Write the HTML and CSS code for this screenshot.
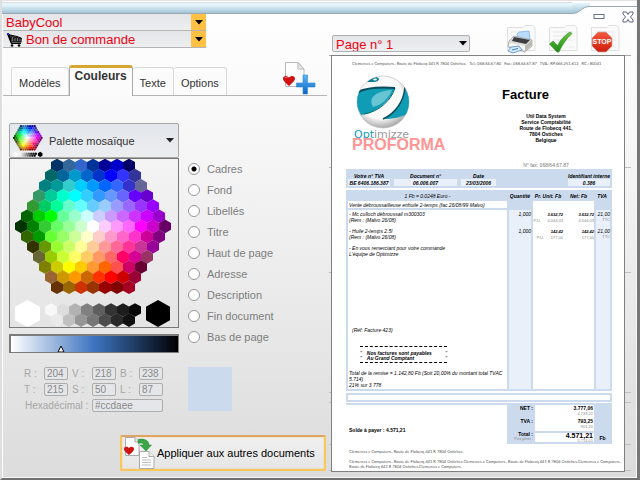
FILE: index.html
```
<!DOCTYPE html>
<html lang="fr">
<head>
<meta charset="utf-8">
<title>BabyCool</title>
<link rel="stylesheet" href="styles.css">
</head>
<body>
<div class="window">
  <header class="titlebar">
    <div class="bar"></div>
    <svg class="curve" width="18" height="14" viewBox="0 0 18 14">
      <defs><linearGradient id="tb" x1="0" y1="0" x2="0" y2="1"><stop offset="0" stop-color="#e6f5fc"/><stop offset="1" stop-color="#a3c4d6"/></linearGradient></defs>
      <path d="M0 3H18V6.500C9 6.500 9 13.500 0 13.500Z" fill="url(#tb)"/>
      <path d="M0 13.500C9 13.500 9 6.500 18 6.500" fill="none" stroke="#9aa9b2"/>
    </svg>
    <div class="controls">
      <button type="button" aria-label="Réduire"><svg width="12" height="12" viewBox="0 0 12 12"><rect x="1" y="3.500" width="10" height="4" fill="#fff" stroke="#6a6f8a"/></svg></button>
      <button type="button" aria-label="Fermer"><svg width="12" height="12" viewBox="0 0 12 12"><path d="M1 1H4.500L6 3.500L7.500 1H11V3L8.500 6L11 9V11H7.500L6 8.500L4.500 11H1V9L3.500 6L1 3Z" fill="#fff" stroke="#5d627e"/></svg></button>
    </div>
  </header>

  <main class="columns">
    <section class="left">
      <div class="pickers">
        <div class="field">
          <select aria-label="Société"><option>BabyCool</option></select>
          <span class="arrow"><svg width="8" height="5" viewBox="0 0 8 5"><path d="M0 0H8L4 4.500Z"/></svg></span>
        </div>
        <div class="field with-icon">
          <select aria-label="Document"><option>Bon de commande</option></select>
          <svg class="cart" width="16" height="14" viewBox="0 0 16 14"><path d="M0 1H3L5 9.500H14V11H4.500L3.500 10Z"/><path d="M3 2.500L15 5L14.500 9.500L5 9Z" fill="#222"/><path d="M5.500 4V8M8 5V8M10.500 5V8M13 6V8" stroke="#999" stroke-width=".7"/><path d="M3 2L10 3.500L14 5" stroke="#000"/><path d="M0 1H2" stroke="#22f" stroke-width="2"/><circle cx="5" cy="12.500" r="1.300"/><circle cx="12" cy="12.500" r="1.300"/></svg>
          <span class="arrow"><svg width="8" height="5" viewBox="0 0 8 5"><path d="M0 0H8L4 4.500Z"/></svg></span>
        </div>
      </div>

      <div class="tabrow">
        <nav class="tabs">
          <button type="button">Modèles</button>
          <button type="button" class="active">Couleurs</button>
          <button type="button">Texte</button>
          <button type="button">Options</button>
        </nav>
        <button type="button" class="plain" aria-label="Ajouter aux favoris">
          <svg width="34" height="34" viewBox="0 0 34 34">
            <defs><linearGradient id="blue" x1="0" y1="0" x2="0" y2="1"><stop offset="0" stop-color="#5bb9f7"/><stop offset="1" stop-color="#0a62c4"/></linearGradient></defs>
            <path d="M3.500 1.500H16L22 8V25.500H3.500Z" fill="#fdfdfd" stroke="#b8b8b8"/><path d="M16 1.500V8H22Z" fill="#e9e9e9" stroke="#b8b8b8"/>
            <path d="M7 25C4 22 1 20 1 17.500C1 14.500 5 14 7 16.500C9 14 13 14.500 13 17.500C13 20 10 22 7 25Z" fill="#cf1313"/><path d="M3 17C3.500 16 5 16 5.500 17" stroke="#f88" fill="none"/>
            <path d="M21 14H25.500V22H33V26H25.500V33H21V26H14.500V22H21Z" fill="url(#blue)" stroke="#2f86d8" stroke-width=".6"/>
          </svg>
        </button>
      </div>

      <div class="editor">
        <div class="palette">
          <button type="button" class="palette-button">
            <svg width="32" height="32" viewBox="0 0 168 168"><use href="#mosaic"/></svg>
            <span>Palette mosaïque</span>
            <svg width="8" height="5" viewBox="0 0 8 5"><path d="M0 0H8L4 4.500Z" fill="#222"/></svg>
          </button>
          <svg class="mosaic" viewBox="0 0 168 168" role="img" aria-label="Couleurs"><g id="mosaic"></g></svg>
          <input class="shade" type="range" min="0" max="100" value="29" aria-label="Luminosité">
        </div>
        <div class="targets">
          <label><input type="radio" name="target" checked>Cadres</label>
          <label><input type="radio" name="target">Fond</label>
          <label><input type="radio" name="target">Libellés</label>
          <label><input type="radio" name="target">Titre</label>
          <label><input type="radio" name="target">Haut de page</label>
          <label><input type="radio" name="target">Adresse</label>
          <label><input type="radio" name="target">Description</label>
          <label><input type="radio" name="target">Fin document</label>
          <label><input type="radio" name="target">Bas de page</label>
        </div>
        <div class="values">
          <label for="r">R :</label><input id="r" value="204">
          <label for="v">V :</label><input id="v" value="218">
          <label for="b">B :</label><input id="b" value="238">
          <label for="t">T :</label><input id="t" value="215">
          <label for="s">S :</label><input id="s" value="50">
          <label for="l">L :</label><input id="l" value="87">
          <label for="hex" class="hex-label">Hexadécimal :</label><input id="hex" class="hex" value="#ccdaee">
        </div>
        <div class="swatch"></div>
      </div>

      <button type="button" class="apply">
        <svg width="32" height="32" viewBox="0 0 32 32">
          <path d="M2.500 .5H12L16 5V18.500H2.500Z" fill="#fff" stroke="#aaa"/><path d="M12 .5V5H16" fill="#eee" stroke="#aaa"/>
          <path d="M16.500 14.500H26L31 19.500V31.500H16.500Z" fill="#fff" stroke="#aaa"/><path d="M26 14.500V19.500H31" fill="#eee" stroke="#aaa"/>
          <path d="M19 20.500H24M19 23H28M19 25.500H28M19 28H28" stroke="#bbb"/>
          <path d="M15 2.500C22 1 26 4 26 8H28.500L23 14L17 8H20.500C20.500 6 18 5.500 15 6.500Z" fill="#3aa648" stroke="#2b8b3a" stroke-width=".5"/>
          <path d="M6 18C3 15.500 1 14 1 12C1 9.500 4.500 9 6 11C7.500 9 11 9.500 11 12C11 14 9 15.500 6 18Z" fill="#cf1313"/>
        </svg>
        <span>Appliquer aux autres documents</span>
      </button>
    </section>

    <section class="right">
      <div class="toolbar">
        <div class="field page-field">
          <select aria-label="Page"><option>Page n° 1</option></select>
          <span class="arrow"><svg width="8" height="5" viewBox="0 0 8 5"><path d="M0 0H8L4 4.500Z"/></svg></span>
        </div>
        <div class="tools">
          <button type="button" class="plain" aria-label="Imprimer">
            <svg width="30" height="30" viewBox="0 0 30 30">
              <g id="folder"><path d="M1.500 3.500H17L19 1.500H27L29 4V26.500H1.500Z" fill="#fafafa" stroke="#e0e0e0"/><path d="M5 8H25M5 12H25M5 16H25M21 23H26" stroke="#e8e8e8"/></g>
              <path d="M11 10L13 8L23 7L24 15L13 17Z" fill="#b9dcfa" stroke="#6da5d8" stroke-width=".6"/>
              <path d="M3 17L8 12L26 16V22L19 28L2 23Z" fill="#dcdcd8" stroke="#999" stroke-width=".7"/>
              <path d="M8 13L24 16L20 20L6 17Z" fill="#3c3e42"/><path d="M4 19L19 22V26L3 22Z" fill="#f7f7f5"/><path d="M19 22L26 16V21L19 27Z" fill="#b9b9b5"/>
              <path d="M5 23L13 22L16 26L7 29L2 27Z" fill="#d3e9ff" stroke="#3d7cc4" stroke-width=".7"/><path d="M6 26L12 24.500" stroke="#3d7cc4"/>
            </svg>
          </button>
          <button type="button" class="plain" aria-label="Valider">
            <svg width="30" height="30" viewBox="0 0 30 30"><defs><linearGradient id="green" x1="0" y1="0" x2="0" y2="1"><stop offset="0" stop-color="#6cc43d"/><stop offset="1" stop-color="#1f8a1c"/></linearGradient></defs><use href="#folder"/><path d="M1.500 20L5 17L9.500 21.500C13 15 17 11 22 8L24 9.500C18 15 14 21 11 28H9Z" fill="url(#green)" stroke="#2f8e24" stroke-width=".6"/></svg>
          </button>
          <button type="button" class="plain" aria-label="Stop">
            <svg width="30" height="30" viewBox="0 0 30 30"><defs><linearGradient id="red" x1="0" y1="0" x2="0" y2="1"><stop offset="0" stop-color="#f4593f"/><stop offset="1" stop-color="#cf1d0c"/></linearGradient></defs><use href="#folder"/><path d="M8 8H16L22 14V22L16 28H8L2 22V14Z" fill="url(#red)" stroke="#c9a9a3" stroke-width=".7"/><text class="stop-text" x="12" y="20" text-anchor="middle">STOP</text></svg>
          </button>
        </div>
      </div>

      <div class="preview">
        <article class="sheet">
          <p class="fine">Clemerces e Computers., Route de Flobecq 441 R 7804 Ostiches. &nbsp; Tel.: 068.64.67.80 &nbsp; Fax.: 068.64.67.87 &nbsp; TVA.: RP.666.251.612 &nbsp; RC.: 80041</p>
          <div class="head">
            <div class="brand">
              <svg width="54" height="54" viewBox="0 0 54 54">
                <defs><radialGradient id="ball" cx=".45" cy=".4" r=".6"><stop offset=".7" stop-color="#fafafa"/><stop offset="1" stop-color="#aaa"/></radialGradient><clipPath id="disc"><circle cx="27" cy="27" r="26"/></clipPath></defs>
                <circle cx="27" cy="27" r="26" fill="url(#ball)" stroke="#bbb" stroke-width=".6"/>
                <g clip-path="url(#disc)"><path d="M0 18C10 12 26 12 39 13C34 26 20 38 5 40L0 30Z" fill="#109cb4"/><path d="M39 13C35 26 22 37 8 39" fill="none" stroke="#066" stroke-width="1"/><path d="M2 17C12 12 26 12 39 13" fill="none" stroke="#0a4d5c" stroke-width="2"/><path d="M17 32C12 24 18 16 36 15C32 24 26 30 17 32Z" fill="#66c4d3"/><path d="M27 44C40 38 48 26 49 12L56 20V36C48 42 38 44 27 44Z" fill="#109cb4"/><path d="M27 44C40 38 48 26 49 12" fill="none" stroke="#0a4d5c" stroke-width="1.500"/><path d="M11 7C16 2 22 1 23 4C22 8 16 7 11 7Z" fill="#0c7f95"/><ellipse cx="19" cy="4.500" rx="2" ry="1" fill="#e8f6f8"/></g>
              </svg>
              <div class="wordmark"><span>Opt</span>imizze</div>
              <div class="proforma">PROFORMA</div>
            </div>
            <div class="recipient">
              <h1>Facture</h1>
              <address>Util Data System<br>Service Comptabilité<br>Route de Flobecq 441,<br>7804 Ostiches<br>Belgique</address>
              <p>N° fax: 068/64.67.87</p>
            </div>
          </div>

          <table class="refs">
            <colgroup><col class="c-vat"><col class="c-doc"><col class="c-date"><col><col class="c-id"></colgroup>
            <thead><tr><th>Votre n° TVA</th><th>Document n°</th><th>Date</th><th></th><th>Identifiant interne</th></tr></thead>
            <tbody><tr><td>BE 6406.186.387</td><td>06.006.007</td><td>23/03/2006</td><td class="none"></td><td>0.386</td></tr></tbody>
          </table>

          <table class="lines">
            <colgroup><col><col class="c-qty"><col class="c-unit"><col class="c-net"><col class="c-tva"></colgroup>
            <thead><tr><th>1 Fb = 0.0248 Euro -</th><th>Quantité</th><th>Pr. Unit. Fb</th><th>Net: Fb</th><th>TVA</th></tr></thead>
            <tbody>
              <tr class="subject"><td>Vente débroussailleuse enhuile 2-temps (fac 26/08/99 Malvo)</td><td class="none"></td><td></td><td></td><td class="none"></td></tr>
              <tr class="item"><td>- Mc culloch débroussail m300303<br>(Rem : (Malvo 26/08)</td><td>1,000</td><td><b>3.632,72</b><small>P.U. &nbsp; &nbsp; &nbsp;4.044,03</small></td><td><b>3.632,72</b><small>4.044,03</small></td><td>21,00<small>TTC</small></td></tr>
              <tr class="item"><td>- Huile 2-temps 2.5l<br>(Rem : (Malvo 26/08)</td><td>1,000</td><td><b>142,42</b><small>P.U. &nbsp; &nbsp; &nbsp;177,00</small></td><td><b>142,42</b><small>177,00</small></td><td>21,00<small>TTC</small></td></tr>
              <tr class="notes"><td>
                <p>- En vous remerciant pour votre commande<br>L'équipe de Optimizze</p>
                <p class="ref">(Réf: Facture 423)</p>
                <p class="terms"><span>"<br>"</span><b>Nos factures sont payables<br>Au Grand Comptant</b><span>"<br>"</span></p>
                <p>Total de la remise = 1.142,80 Fb (Soit 20,00% du montant total TVAC<br>5.714)<br>21% sur 3.778</p>
              </td><td></td><td></td><td></td><td></td></tr>
            </tbody>
          </table>

          <div class="strip"></div>

          <div class="summary">
            <p class="due">Solde à payer : 4.571,21</p>
            <table class="totals">
              <colgroup><col><col class="c-amount"><col class="c-cur"></colgroup>
              <tbody>
                <tr><th>NET :</th><td>3.777,06<small>4.733,22</small></td><td class="cur"></td></tr>
                <tr><th>TVA :</th><td>793,25<small>901,20</small></td><td class="cur"></td></tr>
                <tr class="grand"><th>Total :<small>Prix plein :</small></th><td><strong>4.571,21</strong><small>5.714,01</small></td><td class="cur">Fb</td></tr>
              </tbody>
            </table>
          </div>

          <footer>
            <p class="fine">Clemerces e Computers., Route de Flobecq 441 R 7804 Ostiches.</p>
            <p class="fine">Clemerces e Computers., Route de Flobecq 441 R 7804 Ostiches.Clemerces e Computers., Route de Flobecq 441 R 7804 Ostiches.Clemerces e Computers.,<br>Route de Flobecq 441 R 7804 Ostiches.Clemerces e Computers.</p>
          </footer>
        </article>
      </div>
    </section>
  </main>
</div>
<script src="script.js"></script>
</body>
</html>
```
FILE: styles.css
```
* { box-sizing: border-box; }

body {
  margin: 0;
  font-family: "Liberation Sans", Arial, sans-serif;
  font-size: 11px;
  color: #333;
}

p, h1 { margin: 0; }
button, select, input { font: inherit; color: inherit; }
button { padding: 0; }
svg { display: block; flex: none; }

.window {
  min-height: 100vh;
  display: flex;
  flex-direction: column;
  background: linear-gradient(#fff, #fafafa 20%, #dcdcdc);
  border-left: 2px solid #dedede;
  border-right: 3px solid #777;
  border-bottom: 2px solid #707070;
  box-shadow: inset 1px 0 #fff, inset -1px -1px #f6f6f6;
}

/* Title bar */
.titlebar { display: flex; height: 14px; border-top: 1px solid #e2e2e2; }
.bar {
  flex: 1;
  margin-top: 1px;
  border-top: 1px solid #dcdfe1;
  border-bottom: 1px solid #9aa9b2;
  background: linear-gradient(#e6f5fc 20%, #a3c4d6);
}
.curve { margin-top: -1px; }
.controls {
  display: flex;
  gap: 17px;
  width: 47px;
  height: 22px;
  margin-top: 5px;
  padding: 4px 3px 0 0;
  justify-content: flex-end;
  border-top: 1px solid #9aa9b2;
}
.controls button, .plain { border: 0; background: none; display: block; }
.controls button { height: 12px; }

.columns { flex: 1; display: grid; grid-template-columns: 325px 1fr; }

/* Drop-downs */
.field { display: grid; align-items: start; }
.field > * { grid-area: 1 / 1; }
.field select {
  appearance: none;
  width: 100%;
  height: 17px;
  padding: 1px 3px 0;
  border: 0;
  border-bottom: 1px solid #b4b4b4;
  border-radius: 0;
  background: linear-gradient(#e3e5e9, #eeeff1);
  color: #f00010;
  font-size: 13px;
}
.arrow {
  justify-self: end;
  display: grid;
  place-items: center;
  width: 15px;
  height: 16px;
  background: #ffc043;
  pointer-events: none;
}
.pickers { width: 203px; margin-left: 1px; }
.field.with-icon select { padding-left: 23px; }
.cart { margin: 2px 0 0 4px; pointer-events: none; }

/* Tabs */
.tabrow {
  display: flex;
  justify-content: space-between;
  align-items: flex-end;
  height: 48px;
  margin-left: 1px;
  padding: 0 11px 0 8px;
  border-bottom: 1px solid #b4b4b4;
}
.tabs { display: flex; align-items: flex-end; }
.tabs button {
  height: 28px;
  padding: 3px 7px 0;
  border: 1px solid #dadada;
  border-left-width: 0;
  border-bottom: 0;
  border-radius: 3px 3px 0 0;
  background: #fbfbfb;
}
.tabs button:first-child { border-left-width: 1px; }
.tabs .active {
  height: 31px;
  margin-bottom: -1px;
  padding: 0 5px 12px;
  border: 1px solid #a8a8a8;
  border-top: 3px solid #d6a632;
  border-bottom: 0;
  font-size: 12px;
  font-weight: bold;
}

/* Colour editor */
.editor {
  display: grid;
  grid-template-columns: 170px 1fr;
  column-gap: 9px;
  row-gap: 14px;
  margin-left: 7px;
  padding-top: 27px;
}
.palette { display: grid; }
.palette-button {
  display: flex;
  align-items: center;
  gap: 5px;
  height: 35px;
  padding: 0 4px 0 2px;
  border: 1px solid #a5a5a5;
  border-radius: 2px;
  background: linear-gradient(#e3e6eb, #eceef0);
}
.palette-button span { flex: 1; text-align: left; }
.mosaic { width: 100%; border: 1px solid #777; background: linear-gradient(#f4f4f4, #e4e4e4); }
.shade {
  appearance: none;
  width: 100%;
  height: 19px;
  margin: 6px 0 0;
  border: 2px solid #7c7c7c;
  border-right-width: 1px;
  border-bottom-width: 1px;
  background: linear-gradient(90deg, #fff, #3c73c0 50%, #000);
}
.shade::-webkit-slider-thumb {
  appearance: none;
  width: 8px;
  height: 7px;
  margin-top: 9px;
  background: url("data:image/svg+xml,%3Csvg xmlns='http://www.w3.org/2000/svg' viewBox='0 0 8 7'%3E%3Cpath d='M4 1L7 7H1Z' fill='white' stroke='black'/%3E%3C/svg%3E");
}

.targets { padding-top: 35px; color: #7e7e7e; }
.targets label { display: flex; align-items: center; gap: 7px; height: 21px; }
.targets input {
  appearance: none;
  width: 12px;
  height: 12px;
  margin: 0;
  border: 1px solid #969696;
  border-radius: 50%;
  background: #fff;
}
.targets input:checked { background: radial-gradient(circle, #000 2px, #fff 3px); }

.values {
  display: grid;
  grid-template-columns: 20px 24px 24px 24px 23px 24px;
  row-gap: 3px;
  align-items: center;
  align-content: start;
  margin-left: 15px;
  color: #a6a6a6;
  font-size: 10px;
  line-height: 13px;
  white-space: nowrap;
}
.values label:nth-of-type(3n + 2), .values label:nth-of-type(3n) { padding-left: 4px; }
.values label.hex-label { grid-column: span 3; padding-left: 1px; }
.values input {
  width: 100%;
  height: 13px;
  padding: 0 2px;
  border: 1px solid #adadad;
  border-radius: 2px;
  background: #e4e6e9;
  color: #8a8a8a;
}
.values .hex { grid-column: span 3; }
.swatch { width: 44px; height: 44px; background: #ccdaee; }

.apply {
  display: flex;
  align-items: center;
  gap: 2px;
  width: 206px;
  height: 36px;
  margin: 23px 1px 0 auto;
  padding: 0 1px;
  border: 2px solid #f6c95a;
  border-top-color: #dca565;
  border-radius: 2px;
  box-shadow: inset 0 0 2px #f7c98c;
  background: linear-gradient(#f0f0f0, #e6e6e6);
  color: #000;
}

/* Preview toolbar */
.right { display: flex; flex-direction: column; margin: 0 6px 6px 2px; }
.toolbar {
  display: flex;
  justify-content: space-between;
  align-items: flex-end;
  height: 41px;
  padding: 0 11px 3px 3px;
}
.page-field { width: 138px; }
.page-field select { border: 1px solid #b0b0b0; border-radius: 2px; }
.page-field .arrow { background: none; }
.tools { display: flex; gap: 12px; margin-bottom: -2px; }
.stop-text { font-size: 7px; font-weight: bold; fill: #fff; }

/* Guide lines run behind the sheet */
.preview {
  flex: 1;
  display: grid;
  padding: 0 6px 0 2px;
  background:
    linear-gradient(#aaa 0 0) 0 0 / 100% 1px,
    linear-gradient(#c0c0c0 0 0) 0 112px / 100% 1px,
    linear-gradient(#c0c0c0 0 0) 0 217px / 100% 1px,
    linear-gradient(#c0c0c0 0 0) 0 337px / 100% 1px,
    linear-gradient(#c0c0c0 0 0) 0 347px / 100% 1px,
    linear-gradient(#c0c0c0 0 0) 0 389px / 100% 1px,
    linear-gradient(#c0c0c0 0 0) 0 415px / 100% 1px;
  background-repeat: no-repeat;
}

/* Invoice */
.sheet {
  min-width: 0;
  padding: 5px 12px 0 14px;
  border: 1px solid #808080;
  background: #fff;
  color: #000;
  font-size: 5px;
  line-height: 6px;
}
.fine { color: #555; font-family: Lato, sans-serif; font-size: 4px; line-height: 5px; white-space: nowrap; }
.sheet > .fine { padding-left: 6px; }
.head { display: flex; justify-content: space-between; height: 103px; }
.brand { padding: 9px 0 0 6px; }
.brand svg { margin-left: 4px; }
.wordmark {
  padding-left: 2px;
  color: #999;
  font-family: "DejaVu Sans", sans-serif;
  font-size: 11px;
  line-height: 12px;
}
.wordmark span { color: #109cb4; }
.proforma { margin-top: -5px; color: #ff9494; font-size: 16px; font-weight: bold; line-height: 18px; }
.recipient { width: 132px; padding-top: 21px; text-align: center; }
h1 { padding-left: 22px; font-size: 13px; line-height: 16px; text-align: left; }
address { padding-top: 10px; font-style: normal; font-weight: bold; }
.recipient p { padding-top: 19px; color: #777; }

table { width: 100%; border-spacing: 0; table-layout: fixed; }
th, td { padding: 0; }
small { display: block; color: #888; font-size: 4px; line-height: 5px; font-style: normal; font-weight: normal; }

.refs { background: #ccdaee; border-bottom: 2px solid #ccdaee; font-style: italic; text-align: center; }
.refs th { height: 10px; padding-top: 3px; white-space: nowrap; }
.refs td { height: 7px; background: #e9f0f9; font-weight: bold; border: 0 solid #ccdaee; border-width: 0 2px; }
.refs .none { background: none; }
.c-vat { width: 46px; }
.c-doc { width: 67px; }
.c-date { width: 39px; }
.c-id { width: 46px; }

.lines { margin-top: 2px; border: 2px solid #ccdaee; border-width: 0 2px 2px; font-style: italic; }
.c-qty { width: 26px; }
.c-unit { width: 30px; }
.c-net { width: 31px; }
.c-tva { width: 16px; }
.lines th { height: 11px; background: #ccdaee; white-space: nowrap; }
.lines th:first-child { font-weight: normal; }
.lines td { padding-top: 1px; vertical-align: top; text-align: right; }
.lines td:first-child { text-align: left; white-space: nowrap; padding-left: 1px; }
.lines td:nth-child(2), .lines td:nth-child(5) { background: #e9f0f9; border-left: 2px solid #ccdaee; }
.lines td:nth-child(2) { border-right: 2px solid #ccdaee; }
.lines .subject td { height: 9px; }
.lines .subject td:first-child { border-bottom: 2px solid #ccdaee; }
.lines tr.subject td.none { background: #ccdaee; }
.lines .item td { height: 17px; white-space: nowrap; }
.lines b { font-size: 4px; }
.lines .terms b { font-size: 5px; padding-left: 5px; flex: 1; }
.notes td { height: 145px; }
.ref { margin-top: 70px; padding-left: 3px; }
.terms {
  display: flex;
  width: 87px;
  margin: 13px 0 7px 11px;
  padding: 4px 0 1px;
  border: 1px dashed #000;
  border-width: 1px 0;
  line-height: 5px;
}

.strip { height: 9px; margin-top: 2px; border: 2px solid #ccdaee; }

.summary { display: flex; margin-top: 1px; }
.due { flex: 1; padding: 22px 0 0 3px; border-top: 2px solid #ccdaee; font-weight: bold; }
.totals { width: 105px; background: #ccdaee; border: solid #ccdaee; border-width: 2px 0; font-weight: bold; text-align: right; }
.c-amount { width: 59px; }
.c-cur { width: 18px; }
.totals th { padding: 0 2px; vertical-align: top; text-align: right; white-space: nowrap; }
.totals td { height: 13px; padding-right: 1px; background: #fff; vertical-align: top; }
.totals .grand td { height: 11px; border-top: 2px solid #ccdaee; line-height: 6px; }
.totals .cur, .totals .grand .cur { background: #ccdaee; text-align: center; vertical-align: middle; }
.totals strong { display: block; font-size: 7px; }
.totals .grand small { line-height: 3px; }

footer { padding: 5px 0 2px 3px; }
footer p + p { padding-top: 5px; }
```
FILE: script.js
```
// Honeycomb colour map, one string per row.
const rows = [
  "003366 336699 3366cc 003399 000099 0000cc 000066",
  "006666 006699 0099cc 0066cc 0033cc 0000ff 3333ff 333399",
  "008080 009999 33cccc 00ccff 0099ff 0066ff 3366ff 3333cc 666699",
  "339966 00cc99 00ffcc 00ffff 33ccff 3399ff 6699ff 6666ff 6600ff 6600cc",
  "339933 00cc66 00ff99 66ffcc 66ffff 66ccff 99ccff 9999ff 9966ff 9933ff 9900ff",
  "006600 00cc00 00ff00 66ff99 99ffcc ccffff ccccff cc99ff cc66ff cc33ff cc00ff 9900cc",
  "003300 008000 33cc33 66ff66 99ff99 ccffcc ffffff ffccff ff99ff ff66ff ff00ff cc00cc 660066",
  "336600 009900 66ff33 99ff66 ccff99 ffffcc ffcccc ff99cc ff66cc ff33cc cc0099 800080",
  "333300 669900 99ff33 ccff66 ffff99 ffcc99 ff9999 ff6699 ff3399 cc3399 990099",
  "666633 99cc00 ccff33 ffff66 ffcc66 ff9966 ff6666 ff0066 d60094 993366",
  "808000 cccc00 ffff00 ffcc00 ff9933 ff6600 ff5050 cc0066 660033",
  "996633 cc9900 ff9900 cc6600 ff3300 ff0000 cc0000 990033",
  "663300 996600 cc3300 993300 990000 800000 a50021"
];
const greys = [
  "f8f8f8 dddddd b2b2b2 808080 5f5f5f 333333 1c1c1c 080808",
  "eaeaea c0c0c0 969696 777777 4d4d4d 292929 111111"
];
const group = document.getElementById("mosaic");

function hexagon(x, y, w, r, fill) {
  const p = document.createElementNS("http://www.w3.org/2000/svg", "path");
  p.setAttribute("d", `M${x} ${y - r}L${x + w} ${y - r / 2}V${y + r / 2}L${x} ${y + r}L${x - w} ${y + r / 2}V${y - r / 2}Z`);
  p.setAttribute("fill", "#" + fill);
  group.appendChild(p);
}

function honeycomb(list, middle, top) {
  list.forEach((row, j) => {
    const cells = row.split(" ");
    cells.forEach((c, i) => hexagon(middle + (i - (cells.length - 1) / 2) * 12, top + j * 10.15, 6, 6.8, c));
  });
}

honeycomb(rows, 83, 6.5);
honeycomb(greys, 83, 151);
hexagon(17.5, 154.5, 12.5, 13.5, "ffffff");
hexagon(148, 154.5, 12, 13.5, "000000");
```
